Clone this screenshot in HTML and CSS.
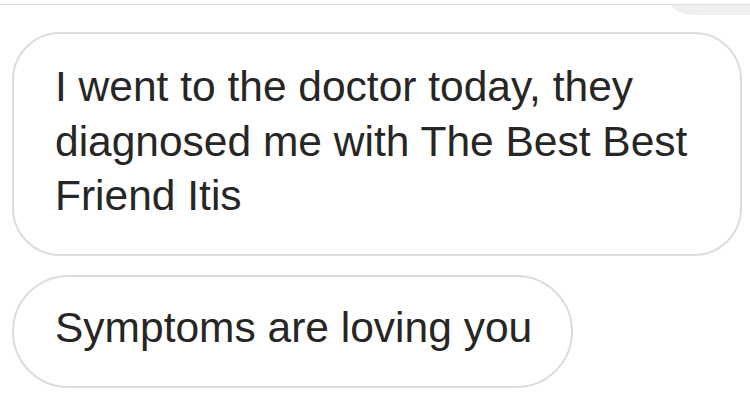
FILE: index.html
```html
<!DOCTYPE html>
<html>
<head>
<meta charset="utf-8">
<link rel="stylesheet" href="styles.css">
</head>
<body>
<div class="thread">
  <div class="topline"></div>
  <div class="prev-row"><div class="prev-bubble"></div></div>
  <div class="bubble big">I went to the doctor today, they diagnosed me with The Best Best Friend Itis</div>
  <div class="bubble pill">Symptoms are loving you</div>
</div>
</body>
</html>
```
FILE: styles.css
```css
html, body {
  margin: 0;
  padding: 0;
  background: #ffffff;
}
.thread {
  width: 750px;
  height: 407px;
  overflow: hidden;
  font-family: "Liberation Sans", Arial, sans-serif;
  color: #262626;
}
.topline {
  height: 4px;
  border-bottom: 1px solid #dedede;
}
.prev-row {
  display: flex;
  justify-content: flex-end;
}
.prev-bubble {
  width: 78px;
  height: 10px;
  background: #efefef;
  border-bottom-left-radius: 26px 10px;
}
.bubble {
  box-sizing: border-box;
  border: 2px solid #dcdcdc;
  background: #fff;
  font-size: 42.5px;
  line-height: 54.5px;
  margin-left: 12px;
}
.big {
  margin-top: 17px;
  width: 730px;
  height: 224px;
  border-radius: 48px;
  padding: 26px 40px 0 41px;
}
.pill {
  margin-top: 19px;
  width: 561px;
  height: 113px;
  border-radius: 57px;
  padding: 24px 0 0 41px;
}
```
